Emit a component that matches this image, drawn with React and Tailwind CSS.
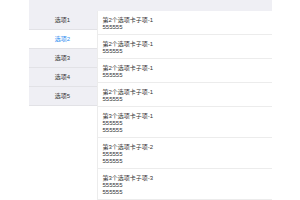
import React, { useState } from 'react';

const tabs = ['选项1', '选项2', '选项3', '选项4', '选项5'];

const items = [
  { title: '第2个选项卡子项-1', lines: ['555555'] },
  { title: '第2个选项卡子项-1', lines: ['555555'] },
  { title: '第2个选项卡子项-1', lines: ['555555'] },
  { title: '第2个选项卡子项-1', lines: ['555555'] },
  { title: '第3个选项卡子项-1', lines: ['555555', '555555'] },
  { title: '第3个选项卡子项-2', lines: ['555555', '555555'] },
  { title: '第3个选项卡子项-3', lines: ['555555', '555555'] },
];

const App = () => {
  const [active, setActive] = useState(1);

  return (
    <div
      className="w-[300px] h-[200px] overflow-hidden bg-white"
      style={{ fontFamily: '"Liberation Sans", "Noto Sans CJK SC", sans-serif' }}
    >
      <div className="w-[243px] mx-auto">
        <div className="h-[11px] bg-[#efeff4]"></div>
        <div className="flex">
          <ul className="w-[68px] shrink-0 self-start">
            {tabs.map((t, i) => (
              <li
                key={t}
                onClick={() => setActive(i)}
                className={
                  'h-[19px] flex items-center justify-center text-[6px] leading-[7px] border-b border-[#e2e2e6] cursor-pointer ' +
                  (i === active ? 'bg-white text-[#2a8cf0]' : 'bg-[#efeff4] text-[#333]')
                }
              >
                {t}
              </li>
            ))}
          </ul>
          <div className="flex-1 border-l border-[#ececec] min-h-[200px]">
            {items.map((it, i) => (
              <div key={i} className="pl-[5px] pt-[6px] pb-[3px] border-b border-[#ececec] text-[6px] leading-[7px] text-[#333]">
                <div>{it.title}</div>
                {it.lines.map((l, j) => (
                  <div key={j}>{l}</div>
                ))}
              </div>
            ))}
          </div>
        </div>
      </div>
    </div>
  );
};

export default App;
